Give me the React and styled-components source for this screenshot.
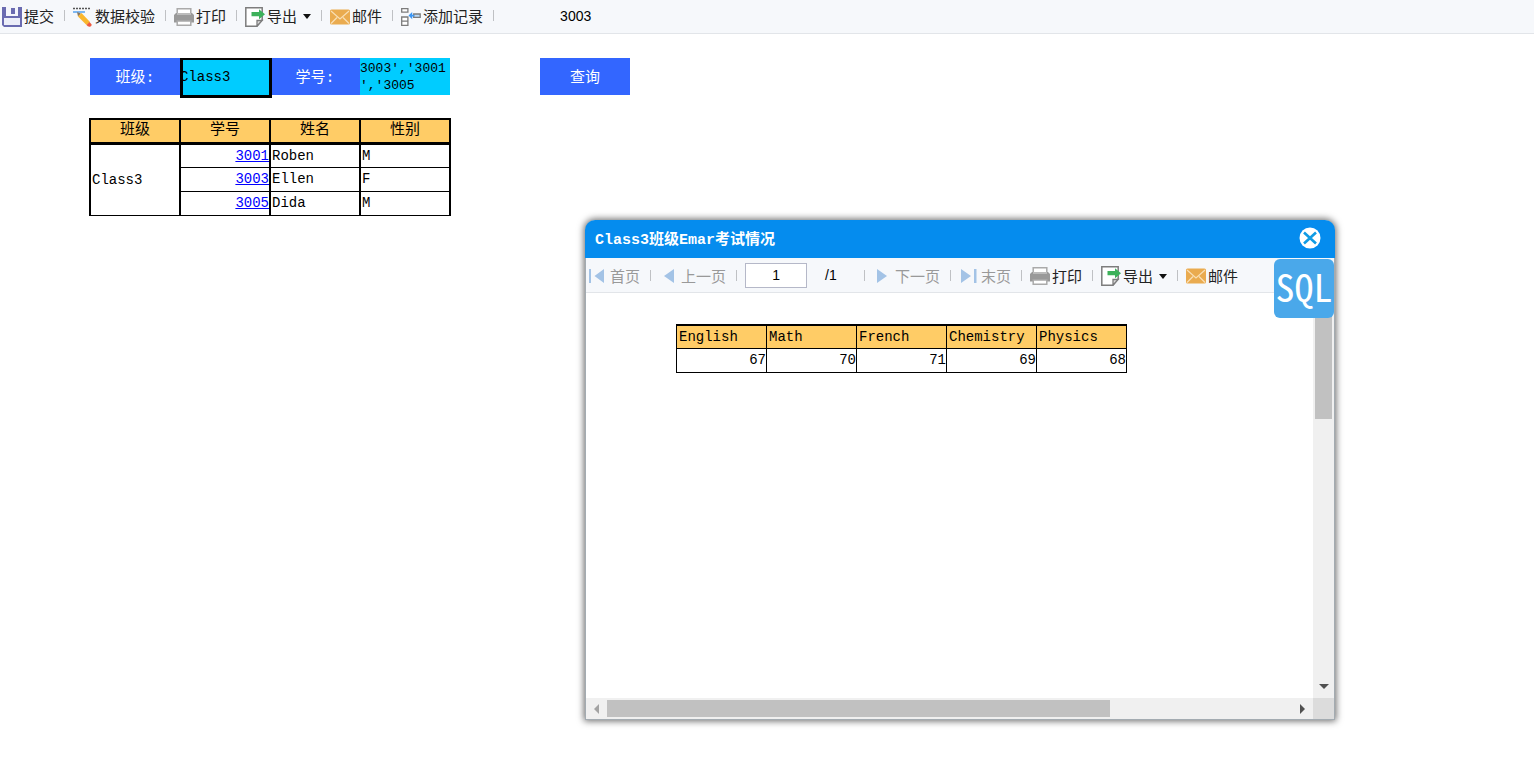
import React from 'react';
import styled, { createGlobalStyle } from 'styled-components';

const mono = '"Liberation Mono", "Noto Sans CJK SC", monospace';
const sans = '"Liberation Sans", "Noto Sans CJK SC", sans-serif';

const students = [
  { id: '3001', name: 'Roben', sex: 'M' },
  { id: '3003', name: 'Ellen', sex: 'F' },
  { id: '3005', name: 'Dida', sex: 'M' },
];

const scores = [
  { subject: 'English', score: 67 },
  { subject: 'Math', score: 70 },
  { subject: 'French', score: 71 },
  { subject: 'Chemistry', score: 69 },
  { subject: 'Physics', score: 68 },
];

const SaveIcon = () => (
  <Icon viewBox="0 0 20 20">
    <path d="M0 0h20v20H2l-2-2z" fill="#6a6bb0" />
    <path d="M4 0h12v9H4z" fill="#f4f5fb" />
    <path d="M9 1h4v6H9z" fill="#6a6bb0" />
    <path d="M2 11h16v7H2z" fill="#eceef8" />
  </Icon>
);

const CheckIcon = () => (
  <Icon viewBox="0 0 20 20">
    <path d="M0 1.500h18" stroke="#555" strokeWidth="1.600" strokeDasharray="2 1" />
    <path d="M0 5h12" stroke="#4b9cf0" strokeWidth="1.400" />
    <path d="M4 5l4 1.500-3 3z" fill="#8a7a62" />
    <path d="M5 9.500L8.500 6l8.500 9-3.500 3z" fill="#f9b72f" />
    <path d="M13.500 18l3-3 2 2.200q.6 1.800-1.500 2.500-2 .4-3.500-1.700z" fill="#ee5a40" />
  </Icon>
);

const PrintIcon = () => (
  <Icon viewBox="0 0 20 20">
    <path d="M3.200 7V1.700h13.600V7" fill="#fff" stroke="#aaa" strokeWidth="1.500" />
    <path d="M2 6h16l2 2v7.500H0V8z" fill="#999" />
    <path d="M3 6h14v2H3z" fill="#bbb" />
    <path d="M3.200 14h13.600v4.300H3.200z" fill="#fff" stroke="#aaa" strokeWidth="1.500" />
  </Icon>
);

const ExportIcon = () => (
  <Icon viewBox="0 0 20 20">
    <path d="M.8.8h16.400v12l-5.200 6.400H.8z" fill="#fff" stroke="#7d7d7d" strokeWidth="1.500" />
    <path d="M12 19v-5.500h5.200z" fill="#ddd" stroke="#7d7d7d" strokeWidth="1.300" />
    <path d="M6.500 5H14V2.200l6 5-6 5V9.300H6.500z" fill="#3db15a" />
  </Icon>
);

const MailIcon = () => (
  <Icon viewBox="0 0 20 20">
    <rect y="2.500" width="20" height="15" rx="1.500" fill="#eaab4f" />
    <path d="M1 4l9 8 9-8M1 16.500l6-6M19 16.500l-6-6" fill="none" stroke="#f9dfb5" strokeWidth="1.200" />
  </Icon>
);

const AddRecordIcon = () => (
  <Icon viewBox="0 0 20 20">
    <g fill="#fff" stroke="#7c7c7c" strokeWidth="1.300">
      <path d="M.7 1.700h6.200v3.500H.7zM.7 10h6.200v4.200H.7zM.7 14.200h6.200v4.200H.7z" />
      <path d="M12.700 7h6.500v3.300h-6.500z" fill="#b9d9f7" />
    </g>
    <path d="M7.500 8.600L11.200 5v2.700h2v1.800h-2v2.800z" fill="#3c97f5" />
  </Icon>
);

const FirstIcon = () => (
  <Icon viewBox="0 0 20 20">
    <path d="M1 3h2v14H1zM16 3v14L6.500 10z" fill="#a3c3e6" />
  </Icon>
);

const PrevIcon = () => (
  <Icon viewBox="0 0 20 20">
    <path d="M15 3v14L5 10z" fill="#a3c3e6" />
  </Icon>
);

const NextIcon = () => (
  <Icon viewBox="0 0 20 20">
    <path d="M4 3v14l10-7z" fill="#a3c3e6" />
  </Icon>
);

const LastIcon = () => (
  <Icon viewBox="0 0 20 20">
    <path d="M2 3v14l10-7zM15 3h2.500v14H15z" fill="#a3c3e6" />
  </Icon>
);

const CloseIcon = () => (
  <svg width="22" height="22" viewBox="0 0 22 22">
    <circle cx="11" cy="11" r="10.500" fill="#fff" />
    <path d="M5 5.500l12 11M17 5.500l-12 11" stroke="#109be4" strokeWidth="2.600" />
  </svg>
);

const Arrow = ({ d, color }) => (
  <svg width="10" height="10" viewBox="0 0 10 10">
    <path d={d} fill={color} />
  </svg>
);

const Caret = () => (
  <CaretIcon viewBox="0 0 8 5">
    <path d="M0 0h8L4 5z" fill="#111" />
  </CaretIcon>
);

const Dialog = () => {
  return (
    <DialogWrap role="dialog" aria-labelledby="dialog-title">
      <DialogHeader>
        <DialogTitle id="dialog-title">Class3班级Emar考试情况</DialogTitle>
        <CloseButton type="button" aria-label="关闭">
          <CloseIcon />
        </CloseButton>
      </DialogHeader>
      <Toolbar>
        <ToolButton disabled><FirstIcon />首页</ToolButton>
        <Divider />
        <ToolButton disabled><PrevIcon />上一页</ToolButton>
        <Divider />
        <PageInput aria-label="页码" defaultValue="1" />
        <PageTotal>/1</PageTotal>
        <Divider />
        <ToolButton disabled><NextIcon />下一页</ToolButton>
        <Divider />
        <ToolButton disabled><LastIcon />末页</ToolButton>
        <Divider />
        <ToolButton><PrintIcon />打印</ToolButton>
        <Divider />
        <ToolButton><ExportIcon />导出<Caret /></ToolButton>
        <Divider />
        <ToolButton><MailIcon />邮件</ToolButton>
      </Toolbar>
      <DialogBody>
        <DialogContent>
          <ScoreTable>
            <thead>
              <tr>
                {scores.map(({ subject }) => (
                  <th key={subject}>{subject}</th>
                ))}
              </tr>
            </thead>
            <tbody>
              <tr>
                {scores.map(({ subject, score }) => (
                  <td key={subject}>{score}</td>
                ))}
              </tr>
            </tbody>
          </ScoreTable>
        </DialogContent>
        <VerticalBar>
          <VerticalThumb />
          <Arrow d="M0 3h10L5 8z" color="#505050" />
        </VerticalBar>
        <HorizontalBar>
          <Arrow d="M7 0v10L2 5z" color="#a3a3a3" />
          <HorizontalThumb />
          <Arrow d="M3 0v10l5-5z" color="#505050" />
        </HorizontalBar>
        <Corner />
      </DialogBody>
      <SqlButton type="button">SQL</SqlButton>
    </DialogWrap>
  );
};

const App = () => {
  return (
    <Page>
      <GlobalStyle />
      <PageToolbar>
        <ToolButton><SaveIcon />提交</ToolButton>
        <Divider />
        <ToolButton><CheckIcon />数据校验</ToolButton>
        <Divider />
        <ToolButton><PrintIcon />打印</ToolButton>
        <Divider />
        <ToolButton><ExportIcon />导出<Caret /></ToolButton>
        <Divider />
        <ToolButton><MailIcon />邮件</ToolButton>
        <Divider />
        <ToolButton><AddRecordIcon />添加记录</ToolButton>
        <Divider />
        <CurrentId>3003</CurrentId>
      </PageToolbar>
      <Main>
        <QueryForm onSubmit={(e) => e.preventDefault()}>
          <QueryLabel htmlFor="class">班级:</QueryLabel>
          <ActiveCell>
            <ClassInput id="class" defaultValue="Class3" />
          </ActiveCell>
          <QueryLabel htmlFor="ids">学号:</QueryLabel>
          <IdsInput id="ids" defaultValue="3003','3001','3005" />
          <QueryButton>查询</QueryButton>
        </QueryForm>
        <StudentTable>
          <thead>
            <tr>
              <th>班级</th>
              <th>学号</th>
              <th>姓名</th>
              <th>性别</th>
            </tr>
          </thead>
          <tbody>
            {students.map(({ id, name, sex }, index) => (
              <tr key={id}>
                {index === 0 && <td rowSpan={students.length}>Class3</td>}
                <IdCell><a href={`#${id}`}>{id}</a></IdCell>
                <td>{name}</td>
                <td>{sex}</td>
              </tr>
            ))}
          </tbody>
        </StudentTable>
      </Main>
      <Dialog />
    </Page>
  );
};

export default App;

const GlobalStyle = createGlobalStyle`
  * {
    box-sizing: border-box;
  }
  body {
    margin: 0;
    background: #fff;
    color: #000;
    font-family: ${mono};
    font-size: 14px;
  }
  button, input, textarea {
    margin: 0;
    padding: 0;
    border: none;
    border-radius: 0;
    outline: none;
    font: inherit;
  }
  button {
    background: none;
    cursor: pointer;
  }
`;

const Page = styled.div`
  position: relative;
  min-height: 100vh;
`;

const Icon = styled.svg`
  flex: none;
  width: 20px;
  height: 20px;
  margin-top: 2px;
  margin-right: 2px;
`;

const CaretIcon = styled.svg`
  width: 8px;
  height: 5px;
  margin-top: 2px;
  margin-left: 6px;
`;

const Toolbar = styled.div`
  display: flex;
  align-items: center;
  height: 35px;
  padding-left: 2px;
  border-bottom: 1px solid #e2e5e9;
  background: #f6f8fb;
  font-family: ${sans};
  font-size: 15px;
`;

const PageToolbar = styled(Toolbar)`
  height: 34px;
  padding-bottom: 2px;
`;

const ToolButton = styled.button`
  display: flex;
  align-items: center;
  height: 24px;
  color: #222;
  white-space: nowrap;
  &:disabled {
    color: #999;
    cursor: default;
  }
`;

const Divider = styled.span`
  width: 1px;
  height: 11px;
  margin: 0 8px 0 10px;
  background: #bfc1c4;
`;

const CurrentId = styled.span`
  margin-left: 58px;
  font-size: 14px;
`;

const Main = styled.main`
  padding: 24px 90px;
`;

const QueryForm = styled.form`
  display: flex;
  height: 37px;
`;

const QueryLabel = styled.label`
  display: flex;
  justify-content: center;
  align-items: center;
  width: 90px;
  padding-bottom: 2px;
  background: #36f;
  color: #fff;
  font-size: 15px;
`;

const ActiveCell = styled.div`
  position: relative;
  width: 90px;
  &::after {
    content: '';
    position: absolute;
    inset: 0 -2px -3px 0;
    border: 3px solid #000;
    border-top-width: 2px;
    pointer-events: none;
  }
`;

const ClassInput = styled.input`
  width: 100%;
  height: 100%;
  background: #0cf;
`;

const IdsInput = styled.textarea`
  width: 90px;
  padding-top: 2px;
  overflow: hidden;
  background: #0cf;
  font-size: 13px;
  line-height: 17px;
  line-break: anywhere;
  resize: none;
`;

const QueryButton = styled.button`
  width: 90px;
  margin-left: 90px;
  padding-bottom: 2px;
  background: #36f;
  color: #fff;
  font-size: 15px;
`;

const Table = styled.table`
  border-collapse: collapse;
  table-layout: fixed;
  line-height: 20px;
  th {
    background: #fc6;
    font-weight: normal;
  }
  th, td {
    height: 24px;
    border: 1px solid #000;
  }
`;

const StudentTable = styled(Table)`
  width: 362px;
  margin: 23px -1px 0;
  th {
    padding: 0;
    border-width: 2px 2px 3px;
    font-size: 15px;
  }
  td {
    padding: 0 1px;
    border-width: 1px 2px;
  }
`;

const IdCell = styled.td`
  && {
    padding: 0;
  }
  text-align: right;
  a {
    color: #00f;
  }
`;

const ScoreTable = styled(Table)`
  width: 451px;
  margin: 31px 0 0 90px;
  th {
    height: 23px;
    padding: 0 2px;
    border-top-width: 2px;
    text-align: left;
  }
  td {
    padding: 0;
    text-align: right;
  }
`;

const DialogWrap = styled.section`
  position: absolute;
  top: 220px;
  left: 585px;
  display: flex;
  flex-direction: column;
  width: 750px;
  height: 500px;
  border: 1px solid #a3abb1;
  border-top: none;
  border-radius: 10px 10px 0 0;
  background: #fff;
  box-shadow: 0 0 7px 1px rgba(0, 0, 0, 0.6);
`;

const DialogHeader = styled.header`
  display: flex;
  justify-content: space-between;
  align-items: center;
  height: 38px;
  margin: 0 -1px;
  padding: 0 14px 2px 10px;
  border-radius: 10px 10px 0 0;
  background: #058cee;
`;

const DialogTitle = styled.h2`
  margin: 0;
  color: #fff;
  font-size: 15px;
`;

const CloseButton = styled.button`
  display: flex;
`;

const PageInput = styled.input`
  width: 62px;
  height: 25px;
  border: 1px solid #b5b8c8;
  background: #fff;
  font-size: 14px;
  text-align: center;
`;

const PageTotal = styled.span`
  width: 47px;
  padding-left: 18px;
  font-size: 14px;
`;

const DialogBody = styled.div`
  display: grid;
  flex: 1;
  grid-template-columns: 1fr 21px;
  grid-template-rows: 1fr 21px;
`;

const DialogContent = styled.div`
  overflow: hidden;
`;

const VerticalBar = styled.div`
  display: flex;
  flex-direction: column;
  justify-content: space-between;
  align-items: center;
  padding: 19px 0 7px;
  background: #f0f0f0;
`;

const VerticalThumb = styled.div`
  width: 17px;
  height: 107px;
  background: #c1c1c1;
`;

const HorizontalBar = styled.div`
  display: flex;
  align-items: center;
  padding: 0 6px;
  background: #f0f0f0;
`;

const HorizontalThumb = styled.div`
  width: 503px;
  height: 17px;
  margin: 0 auto 0 5px;
  background: #c1c1c1;
`;

const Corner = styled.div`
  background: #dcdcdc;
`;

const SqlButton = styled.button`
  position: absolute;
  top: 39px;
  right: 0;
  width: 60px;
  height: 59px;
  padding-bottom: 6px;
  border-radius: 6px;
  background: #4aa8ea;
  color: #fff;
  font-family: "Noto Sans Mono CJK SC", monospace;
  font-size: 38px;
  line-height: 53px;
`;
